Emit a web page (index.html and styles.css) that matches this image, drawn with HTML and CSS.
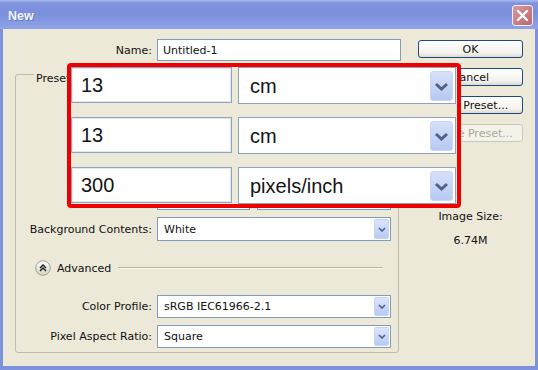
FILE: index.html
```html
<!DOCTYPE html>
<html lang="en">
<head>
    <meta charset="UTF-8">
    <title>New</title>
    <link rel="stylesheet" href="styles.css">
</head>
<body>
    <div class="window">
        <div class="titlebar">
            <span class="title">New</span>
            <button class="close">
                <svg width="13" height="13" viewBox="0 0 13 13"><path d="M2 2 L11 11 M11 2 L2 11" stroke="#fff" stroke-width="2.4" stroke-linecap="round"/></svg>
            </button>
        </div>

        <div class="client">
            <div class="main">
                <div class="name-row">
                    <span class="lbl">Name:</span>
                    <div class="input name-input">Untitled-1</div>
                </div>

                <fieldset class="group">
                    <legend>Preset:</legend>

                    <!-- rows below sit under the callout, only their edges show -->
                    <div class="frow">
                        <span class="lbl"></span>
                        <div class="input w-small"></div>
                        <div class="select w-mid"><span class="val"></span><span class="arrow"></span></div>
                    </div>
                    <div class="frow">
                        <span class="lbl"></span>
                        <div class="input w-small"></div>
                        <div class="select w-mid"><span class="val"></span><span class="arrow"></span></div>
                    </div>
                    <div class="frow">
                        <span class="lbl"></span>
                        <div class="input w-small"></div>
                        <div class="select w-mid"><span class="val"></span><span class="arrow"></span></div>
                    </div>
                    <div class="frow">
                        <span class="lbl"></span>
                        <div class="select w-small"><span class="val"></span><span class="arrow"></span></div>
                        <div class="select w-mid"><span class="val"></span><span class="arrow"></span></div>
                    </div>
                    <div class="frow tall">
                        <span class="lbl">Background Contents:</span>
                        <div class="select w-full"><span class="val">White</span><span class="arrow"><svg width="8" height="5" viewBox="0 0 8 5"><path d="M1 1 L4 4 L7 1" fill="none" stroke="#4d6185" stroke-width="1.6"/></svg></span></div>
                    </div>

                    <div class="advanced">
                        <svg class="adv-icon" width="16" height="16" viewBox="0 0 16 16">
                            <defs>
                                <linearGradient id="advg" x1="0" y1="0" x2="0" y2="1">
                                    <stop offset="0" stop-color="#ffffff"/>
                                    <stop offset="1" stop-color="#d6d3c4"/>
                                </linearGradient>
                            </defs>
                            <circle cx="8" cy="8" r="7.3" fill="url(#advg)" stroke="#a3a192"/>
                            <path d="M5 8 L8 5 L11 8 M5 11 L8 8 L11 11" fill="none" stroke="#1a1a1a" stroke-width="1.4"/>
                        </svg>
                        <span>Advanced</span>
                        <span class="rule"></span>
                    </div>

                    <div class="frow">
                        <span class="lbl">Color Profile:</span>
                        <div class="select w-full"><span class="val">sRGB IEC61966-2.1</span><span class="arrow"><svg width="8" height="5" viewBox="0 0 8 5"><path d="M1 1 L4 4 L7 1" fill="none" stroke="#4d6185" stroke-width="1.6"/></svg></span></div>
                    </div>
                    <div class="frow last">
                        <span class="lbl">Pixel Aspect Ratio:</span>
                        <div class="select w-full"><span class="val">Square</span><span class="arrow"><svg width="8" height="5" viewBox="0 0 8 5"><path d="M1 1 L4 4 L7 1" fill="none" stroke="#4d6185" stroke-width="1.6"/></svg></span></div>
                    </div>
                </fieldset>
            </div>

            <div class="side">
                <button class="btn">OK</button>
                <button class="btn">Cancel</button>
                <button class="btn">Save Preset...</button>
                <button class="btn disabled">Delete Preset...</button>
                <div class="size-label">Image Size:</div>
                <div class="size-value">6.74M</div>
            </div>

            <!-- magnified callout over the size fields -->
            <div class="zoom">
                <div class="zinput">13</div>
                <div class="zselect"><span class="val">cm</span><span class="zarrow"><svg width="15" height="9" viewBox="0 0 15 9"><path d="M2 2 L7.5 7 L13 2" fill="none" stroke="#4e6187" stroke-width="3"/></svg></span></div>
                <div class="zinput">13</div>
                <div class="zselect"><span class="val">cm</span><span class="zarrow"><svg width="15" height="9" viewBox="0 0 15 9"><path d="M2 2 L7.5 7 L13 2" fill="none" stroke="#4e6187" stroke-width="3"/></svg></span></div>
                <div class="zinput">300</div>
                <div class="zselect"><span class="val">pixels/inch</span><span class="zarrow"><svg width="15" height="9" viewBox="0 0 15 9"><path d="M2 2 L7.5 7 L13 2" fill="none" stroke="#4e6187" stroke-width="3"/></svg></span></div>
            </div>
        </div>
    </div>
</body>
</html>
```

FILE: styles.css
```css
body {
    margin: 0;
    font-family: "DejaVu Sans", Tahoma, sans-serif;
    font-size: 11px;
    color: #111;
    background: #ece9d8;
}

.window {
    width: 538px;
    height: 370px;
    display: flex;
    flex-direction: column;
}

.titlebar {
    height: 29px;
    box-sizing: border-box;
    padding: 2px 5px 0 8px;
    display: flex;
    align-items: center;
    justify-content: space-between;
    background: linear-gradient(#a9baee 0, #8094de 3px, #7b90dc 45%, #8ea3e7 100%);
}

.title {
    color: #f4f6fd;
    font: bold 12.5px "Liberation Sans", Arial, sans-serif;
    text-shadow: 1px 1px 0 #6277c4;
}

.close {
    width: 21px;
    height: 21px;
    padding: 0;
    border: 1px solid #f2f2f6;
    border-radius: 3px;
    background: linear-gradient(135deg, #d79aa1, #bc6670);
    display: flex;
    align-items: center;
    justify-content: center;
}

.client {
    flex: 1;
    position: relative;
    display: flex;
    border: solid #7d92dc;
    border-width: 0 3px 4px;
    background: #ece9d8;
}

.main {
    width: 398px;
    box-sizing: border-box;
    padding: 10px 0 0 12px;
}

.lbl {
    text-align: right;
    white-space: nowrap;
}

.name-row {
    display: flex;
    align-items: center;
    gap: 5px;
}

.name-row .lbl {
    width: 137px;
}

.input {
    height: 22px;
    box-sizing: border-box;
    border: 1px solid #7f9db9;
    background: #fff;
    padding-left: 5px;
    display: flex;
    align-items: center;
}

.name-input {
    width: 244px;
}

.group {
    width: 384px;
    box-sizing: border-box;
    margin: 2px 0 0;
    padding: 12px 0 4px;
    border: 1px solid #bebcad;
    border-radius: 3px;
}

.group legend {
    margin-left: 18px;
    padding: 10px 2px 0;
    line-height: 12px;
}

.frow {
    display: flex;
    align-items: center;
    gap: 5px;
    height: 23px;
    margin-bottom: 7px;
}

.frow .lbl {
    width: 136px;
}

.frow.tall {
    height: 24px;
    margin-bottom: 0;
}

.frow.last {
    margin-bottom: 0;
}

.frow > .select:nth-child(3) {
    margin-left: 2px;
}

.w-small { width: 93px; }
.w-mid { width: 134px; }
.w-full { width: 234px; }

.frow .input,
.select {
    height: 100%;
}

.select {
    box-sizing: border-box;
    display: flex;
    border: 1px solid #7f9db9;
    background: #fff;
    padding: 1px;
}

.select .val {
    flex: 1;
    padding-left: 5px;
    display: flex;
    align-items: center;
    white-space: nowrap;
    overflow: hidden;
}

.select .arrow {
    width: 15px;
    box-sizing: border-box;
    border: 1px solid #c7d4f4;
    border-radius: 2px;
    background: linear-gradient(#dbe4fb, #b8cbf6);
    display: flex;
    align-items: center;
    justify-content: center;
}

.advanced {
    height: 16px;
    margin: 19px 15px 19px 19px;
    display: flex;
    align-items: center;
}

.adv-icon {
    margin-right: 6px;
}

.rule {
    flex: 1;
    margin-left: 7px;
    border-top: 1px solid #b9b7a8;
    border-bottom: 1px solid #fbfaf5;
}

.side {
    width: 105px;
    margin-left: 17px;
    padding-top: 11px;
    display: flex;
    flex-direction: column;
    gap: 10px;
}

.btn {
    height: 18px;
    padding: 0;
    border: 1px solid #1f4886;
    border-radius: 3px;
    background: linear-gradient(#ffffff, #f3f2ec 75%, #dcd8cc);
    font: inherit;
    color: #111;
    white-space: nowrap;
}

.btn.disabled {
    border-color: #cac8bb;
    background: #f4f3ea;
    color: #aca899;
}

.size-label {
    margin-top: 58px;
    text-align: center;
    line-height: 13px;
}

.size-value {
    margin-top: 1px;
    text-align: center;
    line-height: 13px;
}

.zoom {
    position: absolute;
    left: 64px;
    top: 34px;
    width: 394px;
    height: 145px;
    box-sizing: border-box;
    border: 4px solid #ee0000;
    border-radius: 4px;
    background: #ece9d8;
    display: grid;
    grid-template-columns: 161px 218px;
    grid-auto-rows: 37px;
    column-gap: 6px;
    row-gap: 13px;
    align-items: start;
    font-family: "Liberation Sans", Arial, sans-serif;
    font-size: 20px;
    color: #141414;
}

.zinput {
    height: 36px;
    box-sizing: border-box;
    border: 1px solid #8ea3bd;
    box-shadow: inset 0 0 0 1px #e3e8ef;
    background: #fff;
    padding-left: 9px;
    display: flex;
    align-items: center;
}

.zselect {
    height: 37px;
    box-sizing: border-box;
    border: 1px solid #8ea3bd;
    background: #fff;
    padding: 3px 2px 2px;
    display: flex;
}

.zselect .val {
    flex: 1;
    padding-left: 9px;
    display: flex;
    align-items: center;
}

.zarrow {
    width: 23px;
    box-sizing: border-box;
    border: 1px solid #c9d5f2;
    border-radius: 3px;
    background: linear-gradient(#d6e0f9, #b7c9f3);
    display: flex;
    align-items: center;
    justify-content: center;
}
```
